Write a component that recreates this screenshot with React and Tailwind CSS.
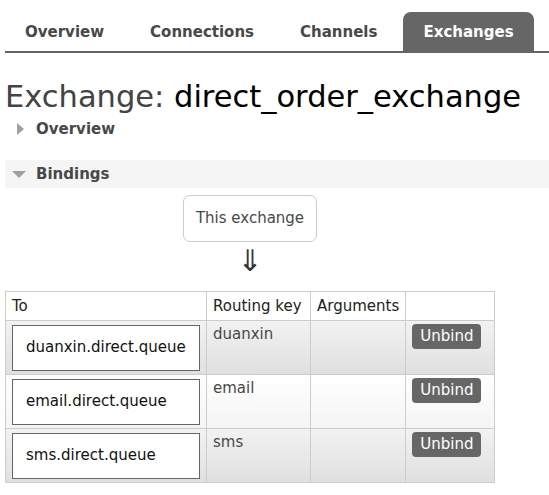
import { useState } from "react";

const tabs = ["Overview", "Connections", "Channels", "Exchanges"];

const bindings = [
    { queue: "duanxin.direct.queue", key: "duanxin" },
    { queue: "email.direct.queue", key: "email" },
    { queue: "sms.direct.queue", key: "sms" },
];

function Tabs() {
    const [active, setActive] = useState("Exchanges");
    return (
        <div className="flex items-end gap-[6px] ml-[5px] pt-3 border-b-2 border-[#666]">
            {tabs.map((t) => (
                <button
                    key={t}
                    onClick={() => setActive(t)}
                    className={
                        t === active
                            ? "h-[39px] pt-[1px] px-5 rounded-t-[8px] bg-[#666] text-white font-bold text-[15px]"
                            : "h-[39px] pt-[1px] px-5 text-[#484848] font-bold text-[15px]"
                    }
                >
                    {t}
                </button>
            ))}
        </div>
    );
}

export default function App() {
    return (
        <div className="w-[549px] h-[495px] bg-white overflow-hidden font-['DejaVu_Sans',Verdana,sans-serif] text-[#484848]">
            <Tabs />

            <h1 className="ml-[5px] mt-[26px] text-[30.5px] leading-[36px] text-[#444]">
                Exchange: <span className="text-black">direct_order_exchange</span>
            </h1>

            {/* collapsed section */}
            <div className="flex items-center h-[24px] ml-[5px] mt-[2px]">
                <span className="w-[31px] pl-[12px] flex items-center">
                    <span className="w-0 h-0 border-y-[6px] border-y-transparent border-l-[7px] border-l-[#a0a0a0]"></span>
                </span>
                <span className="font-bold text-[15px]">Overview</span>
            </div>

            {/* bindings section */}
            <div className="flex items-center h-[28px] ml-[5px] mt-[19px] bg-[#f5f5f5]">
                <span className="w-[31px] pl-[7px] flex items-center">
                    <span className="w-0 h-0 border-x-[7px] border-x-transparent border-t-[7px] border-t-[#a0a0a0]"></span>
                </span>
                <span className="font-bold text-[15px]">Bindings</span>
            </div>

            <div className="flex flex-col items-center w-[500px] mt-[7px]">
                <div className="px-3 h-[47px] flex items-center border border-[#ccc] rounded-[7px] text-[15px]">
                    This exchange
                </div>
                <div className="text-[30px] leading-[34px] mt-[2px] text-[#333]">⇓</div>
            </div>

            <table className="ml-[5px] mt-[13px] border-collapse text-[15px] w-[490px]">
                <thead>
                    <tr className="h-[29px] text-left">
                        <th className="w-[201px] border border-[#ccc] font-normal px-[6px] text-[#222]">To</th>
                        <th className="w-[104px] border border-[#ccc] font-normal px-[6px] text-[#222]">Routing key</th>
                        <th className="w-[95px] border border-[#ccc] font-normal px-[6px] text-[#222]">Arguments</th>
                        <th className="border border-[#ccc]"></th>
                    </tr>
                </thead>
                <tbody>
                    {bindings.map((b, i) => (
                        <tr
                            key={b.queue}
                            className={
                                i % 2 === 0
                                    ? "h-[54px] bg-gradient-to-b from-[#f2f2f2] to-[#e0e0e0]"
                                    : "h-[54px] bg-gradient-to-b from-[#ffffff] to-[#f4f4f4]"
                            }
                        >
                            <td className="border border-[#ccc] px-[6px] py-[3px]">
                                <div className="h-[46px] flex items-center px-[13px] border border-[#666] bg-white text-[#111]">
                                    {b.queue}
                                </div>
                            </td>
                            <td className="border border-[#ccc] px-[6px] pt-[2px] align-top">{b.key}</td>
                            <td className="border border-[#ccc]"></td>
                            <td className="border border-[#ccc] px-[6px] pt-[3px] align-top">
                                <button className="h-[25px] px-[8px] rounded-[4px] bg-[#666] text-white leading-[25px]">
                                    Unbind
                                </button>
                            </td>
                        </tr>
                    ))}
                </tbody>
            </table>
        </div>
    );
}
